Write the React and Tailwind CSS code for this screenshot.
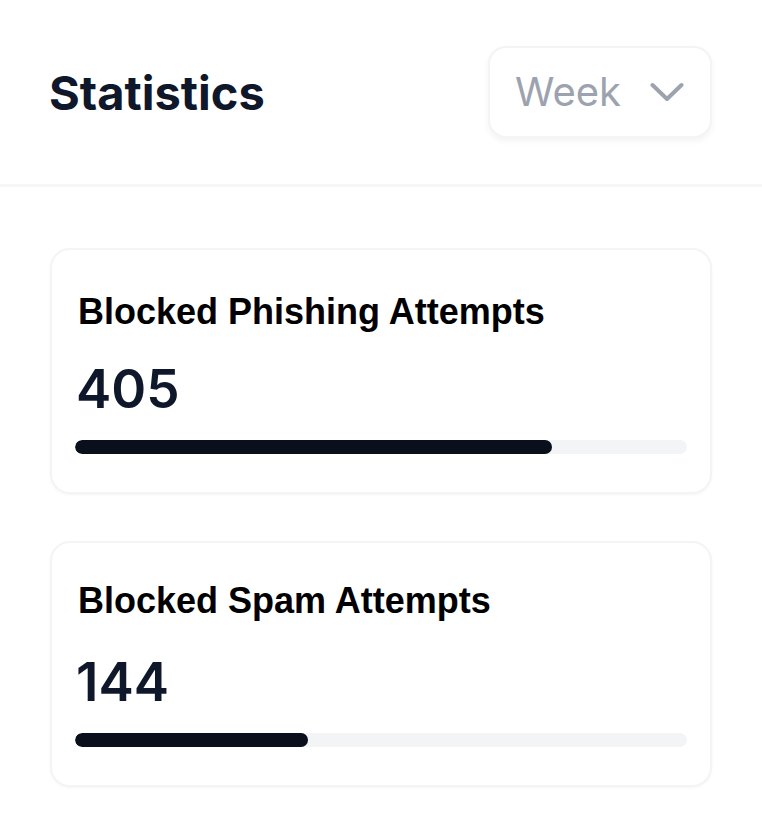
import React from "react";

const stats = [
  { title: "Blocked Phishing Attempts", value: "405", pct: 78, titleOffset: "pt-[42px]", numGap: "mt-[29px]" },
  { title: "Blocked Spam Attempts", value: "144", pct: 38, titleOffset: "pt-[38px]", numGap: "mt-[33px]" },
];

function Card({ s }) {
  return (
    <div className={`rounded-[20px] border-2 border-[#f3f4f6] bg-white shadow-[0_1px_3px_rgba(17,24,39,0.04)] px-[23px] pb-[38px] ${s.titleOffset}`}>
      <div
        className="text-[36px] leading-[40px] font-bold text-black pl-[3px]"
        style={{ fontFamily: '"Liberation Sans", Arial, sans-serif' }}
      >
        {s.title}
      </div>
      <div
        className={`${s.numGap} text-[53px] leading-[56px] font-semibold text-[#0f172a] pl-[1px]`}
        style={{ fontFamily: 'Inter, "Noto Sans", sans-serif' }}
      >
        {s.value}
      </div>
      <div className="mt-[23px] h-[14px] w-full rounded-full bg-[#f3f4f6] overflow-hidden">
        <div className="h-full rounded-full bg-[#0a0f1c]" style={{ width: `${s.pct}%` }} />
      </div>
    </div>
  );
}

export default function App() {
  return (
    <div className="min-h-[840px] w-[762px] bg-white" style={{ fontFamily: 'Inter, "Noto Sans", sans-serif' }}>
      <div className="h-[184px] flex items-center justify-between pl-[49px] pr-[50px]">
        <div className="text-[47px] font-bold text-[#0f172a] leading-none">Statistics</div>
        <div className="w-[224px] h-[92px] rounded-[18px] border-2 border-[#f3f4f6] bg-white shadow-[0_3px_6px_rgba(17,24,39,0.05)] flex items-center justify-between pl-[25px] pr-[26px]">
          <span className="text-[40px] text-[#9ca3af] leading-none">Week</span>
          <svg width="34" height="20" viewBox="0 0 34 20" fill="none">
            <path d="M2.5 3 L17 17 L31.5 3" stroke="#9ca3af" strokeWidth="4" strokeLinecap="round" strokeLinejoin="round" />
          </svg>
        </div>
      </div>
      <div className="h-[3px] bg-[#f6f7f9]" />
      <div className="px-[50px] pt-[61px] flex flex-col gap-[47px]">
        {stats.map((s) => (
          <Card key={s.title} s={s} />
        ))}
      </div>
    </div>
  );
}
